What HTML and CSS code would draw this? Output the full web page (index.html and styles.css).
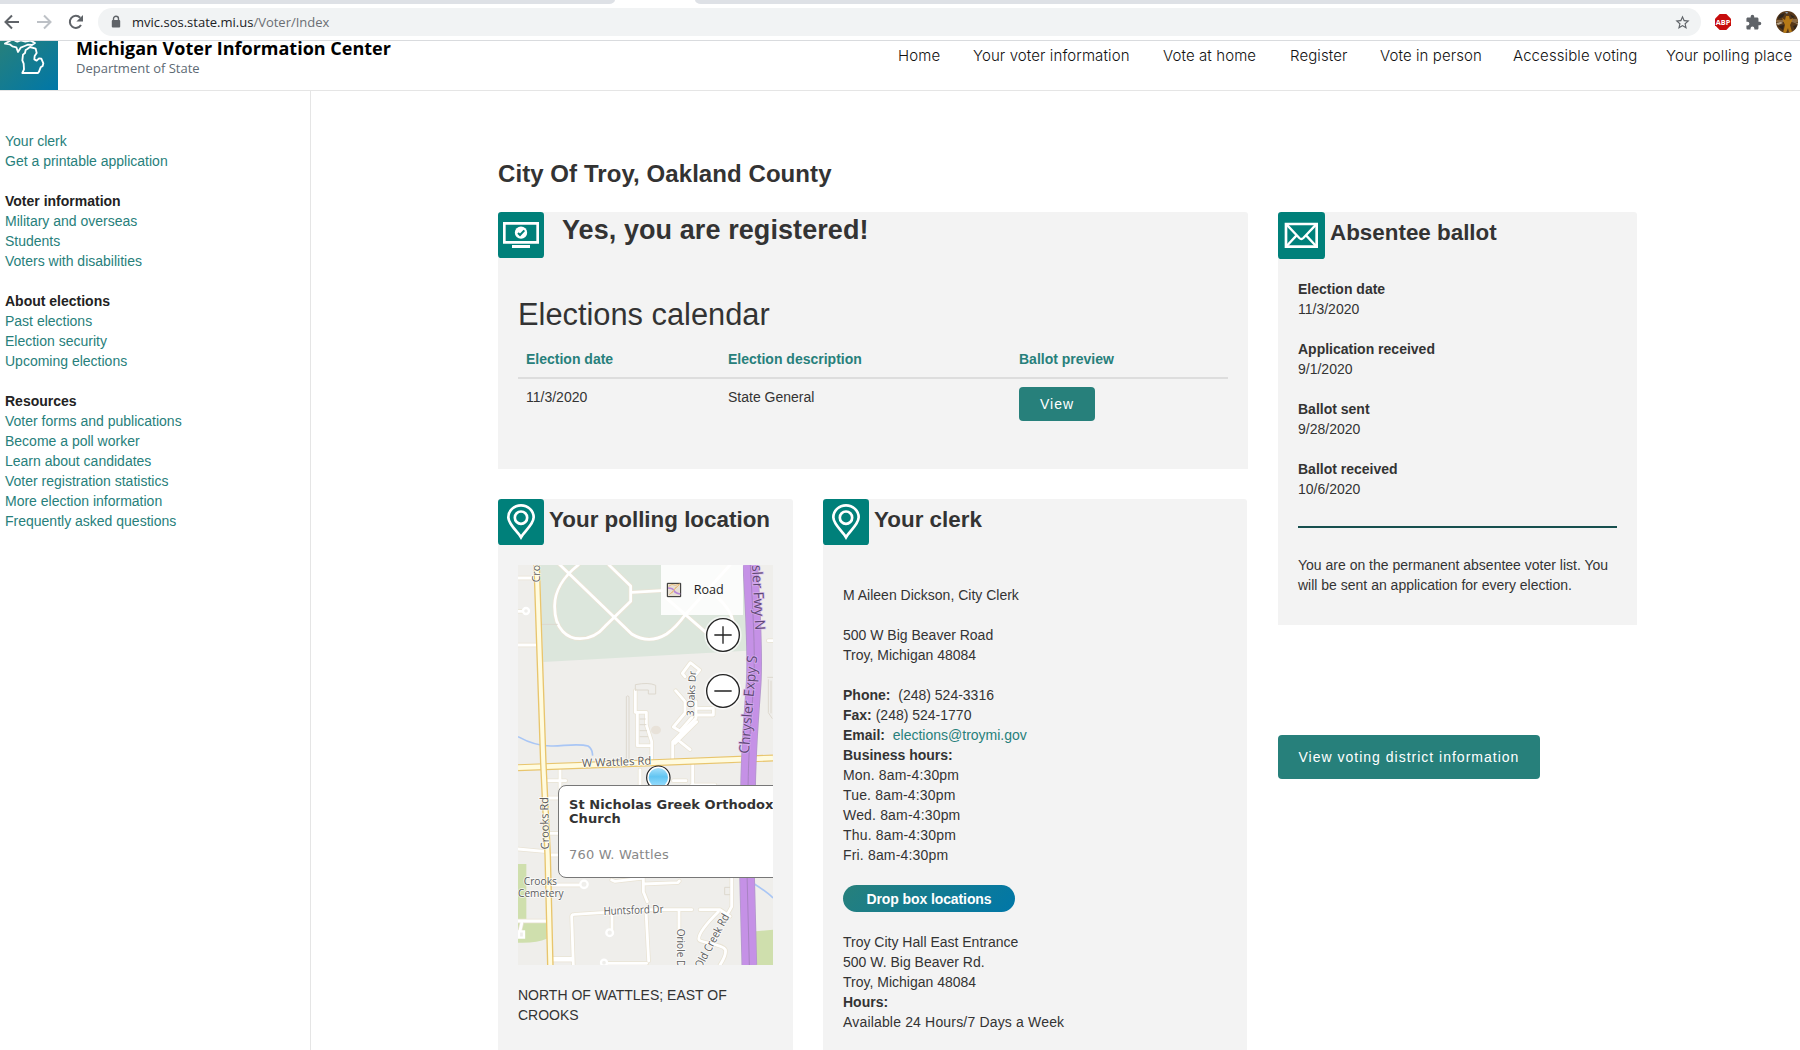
FILE: index.html
```
<!DOCTYPE html>
<html lang="en">
<head>
<meta charset="utf-8">
<title>Michigan Voter Information Center</title>
<link rel="stylesheet" href="styles.css">
</head>
<body>
<div class="tabs"><span class="tab-strip left"></span><span class="tab-strip right"></span></div>
<div class="toolbar">
  <svg class="nav-icons" viewBox="0 0 98 36" fill="none" stroke="#5f6368" stroke-width="2">
    <path d="M19 18H6M12 11.500L5.500 18l6.500 6.500"/>
    <path d="M37 18h13M44 11.500l6.500 6.500-6.500 6.500" stroke="#bdc1c6"/>
    <path d="M81 21a6 6 0 1 1-.8-7.300"/><path d="M83 11v6.600h-6.600z" fill="#5f6368" stroke="none"/>
  </svg>
  <div class="omnibox">
    <svg class="lock" viewBox="0 0 10 14"><path d="M2.500 6V3.800a2.500 2.500 0 0 1 5 0V6" fill="none" stroke="#5f6368" stroke-width="1.400"/><rect x=".8" y="5" width="8.400" height="7.500" rx="1" fill="#5f6368"/></svg>
    <span class="url">mvic.sos.state.mi.us<span class="path">/Voter/Index</span></span>
    <svg class="star" viewBox="0 0 24 24"><path fill="#5f6368" d="M22 9.240l-7.190-.62L12 2 9.190 8.630 2 9.240l5.460 4.730L5.820 21 12 17.270 18.180 21l-1.630-7.030L22 9.240zM12 15.400l-3.760 2.270 1-4.280-3.320-2.880 4.380-.38L12 6.100l1.710 4.040 4.380.38-3.320 2.880 1 4.280L12 15.400z"/></svg>
  </div>
  <div class="extensions">
    <svg width="16" height="16" viewBox="0 0 16 16"><path d="M4.700 0h6.600L16 4.700v6.600L11.300 16H4.700L0 11.300V4.700z" fill="#c70d0d"/><text class="abp" x="8" y="10.800" text-anchor="middle" textLength="14.500" lengthAdjust="spacingAndGlyphs">ABP</text></svg>
    <svg width="17" height="17" viewBox="0 0 24 24"><path fill="#5f6368" d="M20.500 11H19V7c0-1.100-.9-2-2-2h-4V3.500a2.500 2.500 0 0 0-5 0V5H4c-1.100 0-2 .9-2 2v3.800h1.500a2.700 2.700 0 0 1 0 5.400H2V20c0 1.100.9 2 2 2h3.800v-1.500a2.700 2.700 0 0 1 5.400 0V22H17c1.100 0 2-.9 2-2v-4h1.500a2.500 2.500 0 0 0 0-5z"/></svg>
    <svg width="22" height="22" viewBox="0 0 22 22"><clipPath id="av"><circle cx="11" cy="11" r="11"/></clipPath><g clip-path="url(#av)"><path fill="#573819" d="M0 0h22v22H0z"/><path fill="#8c6a43" d="M0 9h9v2H0zM14 8h8v3h-8z"/><path fill="#b9a78b" d="M0 12l5-1 2 1-5 2zM16 11l6 1v1z"/><path fill="#2d241d" d="M3 4l6-2-2 4-5 2zM14 3l5 3-3 1zM2 15l6-1-1 5zM17 15l4-1-2 5z"/><path fill="#b67a16" d="M6 7l3 2 1-4h3l1 4 3-2-2 5-1 2 2 7h-3l-1-4-2 5H7l2-8z"/><path fill="#8ea0b4" d="M9 1h3l-1 2z"/></g></svg>
  </div>
</div>

<header class="site-header">
  <svg class="logo" viewBox="0 123 174 147">
    <defs><linearGradient id="lg" x1="0" y1="0" x2="1" y2="1"><stop offset="0" stop-color="#27807b"/><stop offset="1" stop-color="#0077a8"/></linearGradient></defs>
    <path d="M0 123h174v147H0z" fill="url(#lg)"/>
    <path fill="none" stroke="#fff" stroke-width="5.500" stroke-linejoin="round" d="M34 120L15 131l14 2 8 6 12 3 5 14 8-13 12-5 10-4 12 1 9-6-13-7-16 3-14-4-10 4-8-3M82 147l8-6 17 5 3 13-6 9-1 10 7 4 7-7 7 1 6 14-2 8-6 4-5 13-3 4H67l5-11-1-17-4-10 2-17 6-5 2-9z"/>
  </svg>
  <div class="brand"><div class="brand-name">Michigan Voter Information Center</div><div class="brand-sub">Department of State</div></div>
  <nav class="main-nav"><a>Home</a><a>Your voter information</a><a>Vote at home</a><a>Register</a><a>Vote in person</a><a>Accessible voting</a><a>Your polling place</a></nav>
</header>

<div class="page">
  <aside class="sidebar">
    <ul><li>Your clerk</li><li>Get a printable application</li></ul>
    <h4>Voter information</h4>
    <ul><li>Military and overseas</li><li>Students</li><li>Voters with disabilities</li></ul>
    <h4>About elections</h4>
    <ul><li>Past elections</li><li>Election security</li><li>Upcoming elections</li></ul>
    <h4>Resources</h4>
    <ul><li>Voter forms and publications</li><li>Become a poll worker</li><li>Learn about candidates</li><li>Voter registration statistics</li><li>More election information</li><li>Frequently asked questions</li></ul>
  </aside>

  <main class="content">
    <h1>City Of Troy, Oakland County</h1>
    <div class="columns">
      <div class="primary">
        <section class="card registered">
          <div class="card-head">
            <svg class="badge" viewBox="0 0 138 138"><rect width="138" height="138" rx="10" fill="#00807a"/><path fill="none" stroke="#fff" stroke-width="8" d="M19 34h100v57H19z"/><path fill="#fff" d="M42 99h54v9H42z"/><circle cx="69" cy="62" r="18.500" fill="#fff"/><path d="M60 63l6 6 13-14" fill="none" stroke="#00807a" stroke-width="6"/></svg>
            <h2 class="big">Yes, you are registered!</h2>
          </div>
          <h3>Elections calendar</h3>
          <table>
            <thead><tr><th class="c1">Election date</th><th class="c2">Election description</th><th>Ballot preview</th></tr></thead>
            <tbody><tr><td>11/3/2020</td><td>State General</td><td><a class="btn small">View</a></td></tr></tbody>
          </table>
        </section>
        <div class="pair">
          <section class="card polling">
            <div class="card-head">
              <svg class="badge" viewBox="0 0 138 138"><rect width="138" height="138" rx="10" fill="#00807a"/><g fill="none" stroke="#fff" stroke-width="8"><path d="M69 115C60 99 31 76 31 55a38 36 0 0 1 76 0C107 76 78 99 69 115z"/><circle cx="69" cy="56" r="18.500"/></g></svg>
              <h2>Your polling location</h2>
            </div>
            <div class="map">
              <svg viewBox="24 15 765 1200">
                <path fill="#efeeeb" d="M24 15h765v1200H24z"/>
                <path fill="#dce6dc" d="M90 15h620v257L100 306z"/>
                <path fill="#cfdfad" d="M24 912h25v166H24zM24 1088h86v48q-30 14-86 12zM738 1114l51-5v106h-51z"/>
                <g fill="none" stroke="#e9e3d4" stroke-width="13" stroke-linejoin="round" stroke-linecap="round">
                  <path d="M145 10L365 222q52 32 105 0 30-22 55-57M205 15C160 50 133 95 134 140c0 70 40 96 76 96 30 0 55-13 75-37l77-75V78L297 15M365 97l90-5M470 115l115 100M660 15l-135 150M620 110q45 40 50 80M650 30l-15-15"/>
                  <path d="M24 54h50M24 154h20M24 255h58M376 392v65h33v38l16 50v60M382 457v100h40M488 600v-55l70-70V425M560 485l-65 65M510 545l30 24M497 392l28 32v35l-35 42 20 12 35-40M560 445h50v20h-48M525 350l-8-10 24-32 28 22-18 22M775 242h14"/>
                  <path d="M150 620v97M105 662h62M110 714h40M110 820h35M120 885h30M24 867l85 8M390 630v50M548 615v60M490 662h38M545 675h70M105 975h115M305 960l10 4 85-10M400 955v40l12 30M400 972l103-4 5-5M190 1215l-5-145q0-7 8-7l217-14h135M570 1049h60l30 20M306 1065v48M507 1052v65M665 950v90l-10 18M625 1055c-40 40-62 70-58 84 3 10 70 12 79 30 4 15-16 46-16 46M408 1053l8 150M185 1195h-60M280 1210h130M24 1083h85M35 1090l-8 35M128 1200h60"/>
                </g>
                <g fill="none" stroke="#fff" stroke-width="8.500" stroke-linejoin="round" stroke-linecap="round">
                  <path d="M145 10L365 222q52 32 105 0 30-22 55-57M205 15C160 50 133 95 134 140c0 70 40 96 76 96 30 0 55-13 75-37l77-75V78L297 15M365 97l90-5M470 115l115 100M660 15l-135 150M620 110q45 40 50 80"/>
                  <path d="M24 54h50M24 154h20M24 255h58M376 392v65h33v38l16 50v60M382 457v100h40M488 600v-55l70-70V425M560 485l-65 65M510 545l30 24M497 392l28 32v35l-35 42 20 12 35-40M560 445h50v20h-48M525 350l-8-10 24-32 28 22-18 22M775 242h14"/>
                  <path d="M150 620v97M105 662h62M110 714h40M110 820h35M120 885h30M24 867l85 8M390 630v50M548 615v60M490 662h38M545 675h70M105 975h115M305 960l10 4 85-10M400 955v40l12 30M400 972l103-4 5-5M190 1215l-5-145q0-7 8-7l217-14h135M570 1049h60l30 20M306 1065v48M507 1052v65M665 950v90l-10 18M625 1055c-40 40-62 70-58 84 3 10 70 12 79 30 4 15-16 46-16 46M408 1053l8 150M185 1195h-60M280 1210h130M24 1083h85M35 1090l-8 35M128 1200h60"/>
                </g>
                <g fill="#efeeeb" stroke="#fff" stroke-width="7"><circle cx="48" cy="153" r="9"/><circle cx="222" cy="973" r="11"/><circle cx="299" cy="1118" r="10"/><circle cx="282" cy="1208" r="9"/><path d="M27 1114h15v19H27z"/></g>
                <g fill="none" stroke="#ddd8ce" stroke-width="3"><path d="M349 410v190M357 410v190M349 410q4-5 8 0M376 392v-18q40-8 61 2v26h-22v-12h-40M389 477h18M389 494h20M389 512h22M389 530h25M95 193h48M772 352h17M775 358v100l12 18M783 362v98M660 982h-16v22h16"/></g>
                <ellipse cx="438" cy="510" rx="15" ry="13" fill="#e8e2d9"/>
                <path d="M24 530c45 25 75 29 105 28 45-2 80-8 105 0 15 10 12 18 14 29M733 972q40 25 56 42" fill="none" stroke="#a9c6f5" stroke-width="5"/>
                <path d="M24 623L430 608l359-14" fill="none" stroke="#e8c56d" stroke-width="21"/><path d="M24 623L430 608l359-14" fill="none" stroke="#fffbdf" stroke-width="14"/>
                <path d="M80 15l20 595 13 275 8 330" fill="none" stroke="#e8c56d" stroke-width="20"/><path d="M80 15l20 595 13 275 8 330" fill="none" stroke="#fffbdf" stroke-width="12"/>
                <path d="M721 15C727 130 737 270 731 370 726 450 715 560 714 700L710 900l8 315" fill="none" stroke="#b398cc" stroke-width="47"/>
                <path d="M721 15C727 130 737 270 731 370 726 450 715 560 714 700L710 900l8 315" fill="none" stroke="#c591e6" stroke-width="42"/>
                <path d="M721 15C727 130 737 270 731 370 726 450 715 560 714 700L710 900l8 315" fill="none" stroke="#a883c2" stroke-width="3"/>
                <g class="map-label">
                  <text transform="translate(90 67) rotate(-90)" textLength="52" lengthAdjust="spacingAndGlyphs">Cro</text>
                  <text transform="translate(117 868) rotate(-91)" textLength="157" lengthAdjust="spacingAndGlyphs">Crooks Rd</text>
                  <text transform="translate(216 621) rotate(-2)" textLength="208" lengthAdjust="spacingAndGlyphs">W Wattles Rd</text>
                  <text class="minor" transform="translate(551 469) rotate(-87)" textLength="136" lengthAdjust="spacingAndGlyphs">3 Oaks Dr</text>
                  <text x="41" y="974" textLength="100" lengthAdjust="spacingAndGlyphs">Crooks</text><text x="24" y="1010" textLength="137" lengthAdjust="spacingAndGlyphs">Cemetery</text>
                  <text transform="translate(281 1065) rotate(-2)" textLength="180" lengthAdjust="spacingAndGlyphs">Huntsford Dr</text>
                  <text class="minor" transform="translate(502 1106) rotate(90)" textLength="128" lengthAdjust="spacingAndGlyphs">Oriole Dr</text>
                  <text transform="translate(574 1228) rotate(-62)" textLength="180" lengthAdjust="spacingAndGlyphs">Old Creek Rd</text>
                </g>
                <g class="map-label highway"><text transform="translate(716 582) rotate(-85)" textLength="295" lengthAdjust="spacingAndGlyphs">Chrysler Expy S</text><text transform="translate(726 16) rotate(87)" textLength="195" lengthAdjust="spacingAndGlyphs">sler Fwy N</text></g>
                <path fill="#fff" fill-opacity=".87" d="M453 15h246v150H453z"/>
                <path d="M472 70h40v40h-40z" fill="#e6dfd3" stroke="#222" stroke-width="3"/><path d="M474 84q14 0 18 8t19 10" fill="none" stroke="#b785d8" stroke-width="5"/><path d="M476 79q10-10 20-3l14-4M485 100l14-20M478 104l30-30" fill="none" stroke="#e9bd7d" stroke-width="3"/>
                <text class="map-mode" x="551" y="102" textLength="90" lengthAdjust="spacingAndGlyphs">Road</text>
                <g fill="#fff" stroke="#fff" stroke-width="12" stroke-opacity=".6"><circle cx="639" cy="225" r="50"/><circle cx="639" cy="393" r="50"/></g>
                <g fill="#fff" stroke="#222" stroke-width="4"><circle cx="639" cy="225" r="49"/><circle cx="639" cy="393" r="49"/><path d="M613 225h52M639 199v52M613 393h52"/></g>
                <defs><linearGradient id="pin" x1="0" y1="0" x2="0" y2="1"><stop offset="0" stop-color="#a6e0fb"/><stop offset=".45" stop-color="#62c5f2"/><stop offset="1" stop-color="#9ee0ff"/></linearGradient></defs>
                <circle cx="445" cy="653" r="35" fill="#fff" stroke="#222" stroke-width="3.500"/><circle cx="445" cy="653" r="29" fill="url(#pin)"/>
              </svg>
              <div class="popup"><strong>St Nicholas Greek Orthodox<br>Church</strong><span>760 W. Wattles</span></div>
            </div>
            <p>NORTH OF WATTLES; EAST OF CROOKS</p>
          </section>
          <section class="card clerk">
            <div class="card-head">
              <svg class="badge" viewBox="0 0 138 138"><rect width="138" height="138" rx="10" fill="#00807a"/><g fill="none" stroke="#fff" stroke-width="8"><path d="M69 115C60 99 31 76 31 55a38 36 0 0 1 76 0C107 76 78 99 69 115z"/><circle cx="69" cy="56" r="18.500"/></g></svg>
              <h2>Your clerk</h2>
            </div>
            <div class="card-text">
              <p>M Aileen Dickson, City Clerk</p>
              <p>500 W Big Beaver Road<br>Troy, Michigan 48084</p>
              <div><b>Phone:</b>&nbsp; (248) 524-3316</div>
              <div><b>Fax:</b> (248) 524-1770</div>
              <div><b>Email:</b>&nbsp; <a class="link">elections@troymi.gov</a></div>
              <div><b>Business hours:</b></div>
              <div class="hours">Mon. 8am-4:30pm<br>Tue. 8am-4:30pm<br>Wed. 8am-4:30pm<br>Thu. 8am-4:30pm<br>Fri. 8am-4:30pm</div>
              <a class="pill">Drop box locations</a>
              <div>Troy City Hall East Entrance</div><div>500 W. Big Beaver Rd.</div><div>Troy, Michigan 48084</div>
              <div><b>Hours:</b></div><div class="hours">Available 24 Hours/7 Days a Week</div>
            </div>
          </section>
        </div>
      </div>
      <div class="secondary">
        <section class="card absentee">
          <div class="card-head">
            <svg class="badge wide" viewBox="0 0 141 141"><rect width="141" height="141" rx="10" fill="#00807a"/><path fill="none" stroke="#fff" stroke-width="8" d="M24 36h92v68H24z"/><path fill="none" stroke="#fff" stroke-width="7" d="M26 38l38 40q6 6 12 0l38-40M26 102l29-31M114 102L85 71"/></svg>
            <h2>Absentee ballot</h2>
          </div>
          <dl>
            <dt>Election date</dt><dd>11/3/2020</dd>
            <dt>Application received</dt><dd>9/1/2020</dd>
            <dt>Ballot sent</dt><dd>9/28/2020</dd>
            <dt>Ballot received</dt><dd>10/6/2020</dd>
          </dl>
          <p class="note">You are on the permanent absentee voter list. You will be sent an application for every election.</p>
        </section>
        <a class="btn large">View voting district information</a>
      </div>
    </div>
  </main>
</div>
</body>
</html>
```

FILE: styles.css
```
* { box-sizing: border-box; }
body { margin: 0; height: 1050px; overflow: hidden; background: #fff; color: #333; font: 14px/20px "Liberation Sans", Arial, sans-serif; }
h1, h2, h3, h4, p, ul, dl, dd { margin: 0; padding: 0; }
ul { list-style: none; }

.tabs { display: flex; justify-content: space-between; height: 4px; }
.tab-strip { background: #dee1e6; }
.tab-strip.left { width: 615px; border-bottom-right-radius: 6px 4px; }
.tab-strip.right { width: 1105px; border-bottom-left-radius: 6px 4px; }
.toolbar { display: flex; align-items: center; height: 37px; border-bottom: 1px solid #d9dbde; }
.nav-icons { width: 98px; height: 36px; }
.omnibox { display: flex; align-items: center; width: 1603px; height: 28px; padding: 0 10px 0 13px; border-radius: 14px; background: #f1f3f4; }
.lock { width: 10px; height: 14px; margin-right: 11px; }
.url { flex: 1; font: 13px/20px "Open Sans", sans-serif; color: #202124; }
.path { color: #6a6e73; }
.star { width: 17px; height: 17px; }
.extensions { display: flex; align-items: center; gap: 14px; padding-left: 14px; }
.extensions svg { flex: none; }
.abp { font: bold 7.5px "Open Sans", sans-serif; fill: #fff; }

.site-header { display: flex; height: 50px; border-bottom: 1px solid #e5e5e5; }
.logo { width: 58px; height: 49px; }
.brand { width: 840px; padding-left: 18px; font-family: "Open Sans", sans-serif; }
.brand-name { height: 20px; margin-top: -3px; font-size: 18px; line-height: 20px; font-weight: 700; color: #000; }
.brand-sub { font-size: 13px; line-height: 18px; color: #5d6a74; margin-top: 1px; }
.main-nav { display: grid; grid-template-columns: 75px 190px 127px 90px 133px 153px 127px; padding-top: 5px; font: 300 15px/20px Inter, sans-serif; letter-spacing: .1px; color: #111; white-space: nowrap; }

.page { display: flex; height: 959px; }
.sidebar { width: 311px; padding: 40px 5px; border-right: 1px solid #e5e5e5; color: #27807b; }
.sidebar ul { margin-bottom: 20px; }
.sidebar h4 { font-size: 14px; color: #222; }
.content { padding: 68px 0 0 187px; }
h1 { height: 53px; font-size: 24px; line-height: 30px; letter-spacing: .07px; }
.columns { display: flex; gap: 30px; }
.primary { width: 750px; }
.card { border-radius: 3px 3px 0 0; background: #f3f3f3; }
.card-head { display: flex; height: 47px; }
.badge { width: 46px; height: 46px; }
.badge.wide { width: 47px; height: 47px; }
h2 { margin-left: 5px; font-size: 22.4px; line-height: 30px; padding-top: 6px; white-space: nowrap; }
h2.big { margin-left: 18px; padding-top: 3px; font-size: 27px; letter-spacing: .08px; }

.registered { height: 257px; }
h3 { padding: 36px 20px 0; font-size: 30.8px; font-weight: 400; line-height: 40px; }
table { width: 710px; margin: 13px 20px 0; border-collapse: separate; border-spacing: 0; table-layout: fixed; }
th, td { padding: 8px 0 0 8px; text-align: left; vertical-align: top; }
th { height: 31px; padding-top: 1px; border-bottom: 2px solid #ddd; color: #27807b; }
.c1 { width: 202px; }
.c2 { width: 291px; }
.btn { display: inline-flex; align-items: center; border-radius: 4px; background: #27807b; color: #fff; letter-spacing: 1px; white-space: nowrap; }
.btn.small { height: 34px; padding: 0 21px; }
.btn.large { height: 44px; margin-top: 110px; padding: 0 20.5px; }

.pair { display: grid; grid-template-columns: 295px 424px; column-gap: 30px; margin-top: 30px; }
.polling, .clerk { height: 560px; }
.polling p { padding: 20px; }
.map { position: relative; width: 255px; height: 400px; margin: 19px 20px 0; overflow: hidden; }
.map svg { display: block; width: 255px; height: 400px; }
.map-label { font-family: "Open Sans", sans-serif; font-size: 34px; fill: #5c5c5c; stroke: #fff; stroke-opacity: .75; stroke-width: 5px; paint-order: stroke; }
.minor { font-size: 30px; }
.highway { font-size: 42px; fill: #5f4775; stroke: #d9b5f0; }
.map-mode { font: 37px "Open Sans", sans-serif; fill: #222; }
.popup { position: absolute; left: 40px; top: 220px; width: 260px; height: 93px; padding: 12px 10px; border: 1px solid #777; border-radius: 8px; background: #fff; font: 13px/14px "DejaVu Sans", Verdana, sans-serif; white-space: nowrap; }
.popup strong { display: block; height: 50px; letter-spacing: .05px; color: #333; }
.popup span { color: #888; letter-spacing: .2px; }

.clerk .card-text { padding: 39px 20px 0; }
.clerk p { margin-bottom: 20px; }
.hours { letter-spacing: .17px; }
.link { color: #27807b; }
.pill { display: flex; align-items: center; justify-content: center; width: 172px; height: 27px; margin: 20px 0; border-radius: 14px; background: linear-gradient(135deg, #27807b, #0077a8); color: #fff; font-weight: 700; letter-spacing: -.1px; }

.secondary { width: 359px; }
.absentee { height: 413px; padding-bottom: 50px; }
dl { margin: 20px 20px 0; height: 249px; border-bottom: 2px solid #174f4e; }
dt { font-weight: 700; }
dd { margin-bottom: 20px; }
.note { padding: 27px 20px; }
```
